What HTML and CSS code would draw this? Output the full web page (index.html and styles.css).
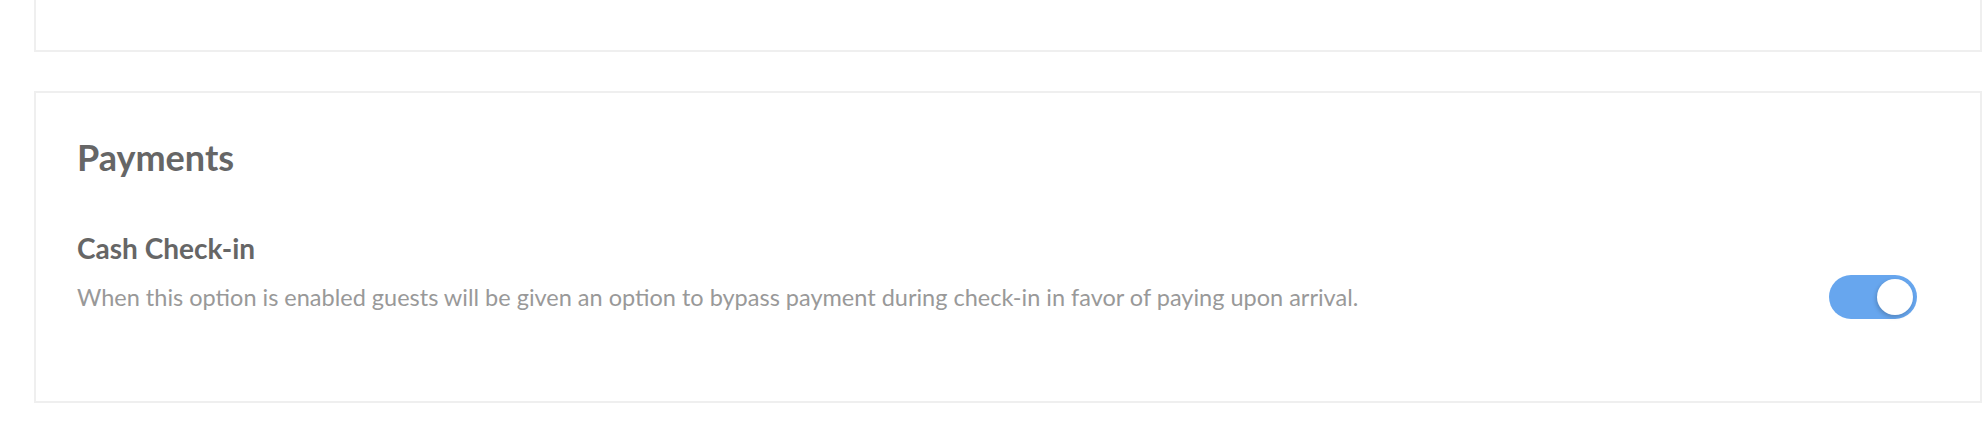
FILE: index.html
```html
<!DOCTYPE html>
<html lang="en">
<head>
    <meta charset="UTF-8">
    <meta name="viewport" content="width=device-width, initial-scale=1.0">
    <title>Settings - Payments</title>
    <link rel="stylesheet" href="styles.css">
</head>
<body>
    <div class="settings">
        <!-- previous section, scrolled mostly out of view -->
        <div class="card card-prev"></div>

        <div class="card">
            <h2 class="card-title">Payments</h2>
            <div class="setting">
                <div class="setting-text">
                    <h3 class="setting-name">Cash Check-in</h3>
                    <p class="setting-desc">When this option is enabled guests will be given an option to bypass payment during check-in in favor of paying upon arrival.</p>
                </div>
                <label class="toggle">
                    <input type="checkbox" checked>
                    <span class="toggle-track"><span class="toggle-knob"></span></span>
                </label>
            </div>
        </div>
    </div>
</body>
</html>
```

FILE: styles.css
```css
* {
    margin: 0;
    padding: 0;
    box-sizing: border-box;
}

body {
    font-family: 'Lato', 'Open Sans', sans-serif;
    background: #fff;
}

.settings {
    padding: 0 6px 0 34px;
}

.card {
    background: #fff;
    border: 2px solid #efefef;
    padding: 42px 63px 82px 41px;
}

.card-prev {
    border-top: none;
    height: 52px;
    padding: 0;
    margin-bottom: 39px;
}

.card-title {
    font-size: 36px;
    line-height: 44px;
    font-weight: 700;
    color: #666;
    margin-bottom: 52px;
}

.setting {
    display: flex;
    justify-content: space-between;
    align-items: flex-start;
}

.setting-name {
    font-size: 28px;
    line-height: 34px;
    font-weight: 700;
    color: #666;
    margin-bottom: 14px;
}

.setting-desc {
    font-size: 23.5px;
    line-height: 36px;
    color: #999;
}

.toggle {
    margin-top: 44px;
    cursor: pointer;
}

.toggle input {
    display: none;
}

.toggle-track {
    display: flex;
    justify-content: flex-end;
    align-items: center;
    width: 88px;
    height: 44px;
    padding: 4px;
    border-radius: 22px;
    background: #67a6ee;
}

.toggle-knob {
    width: 36px;
    height: 36px;
    border-radius: 50%;
    background: #fff;
    box-shadow: -1px 2px 4px rgba(0, 0, 0, 0.2);
}
```
